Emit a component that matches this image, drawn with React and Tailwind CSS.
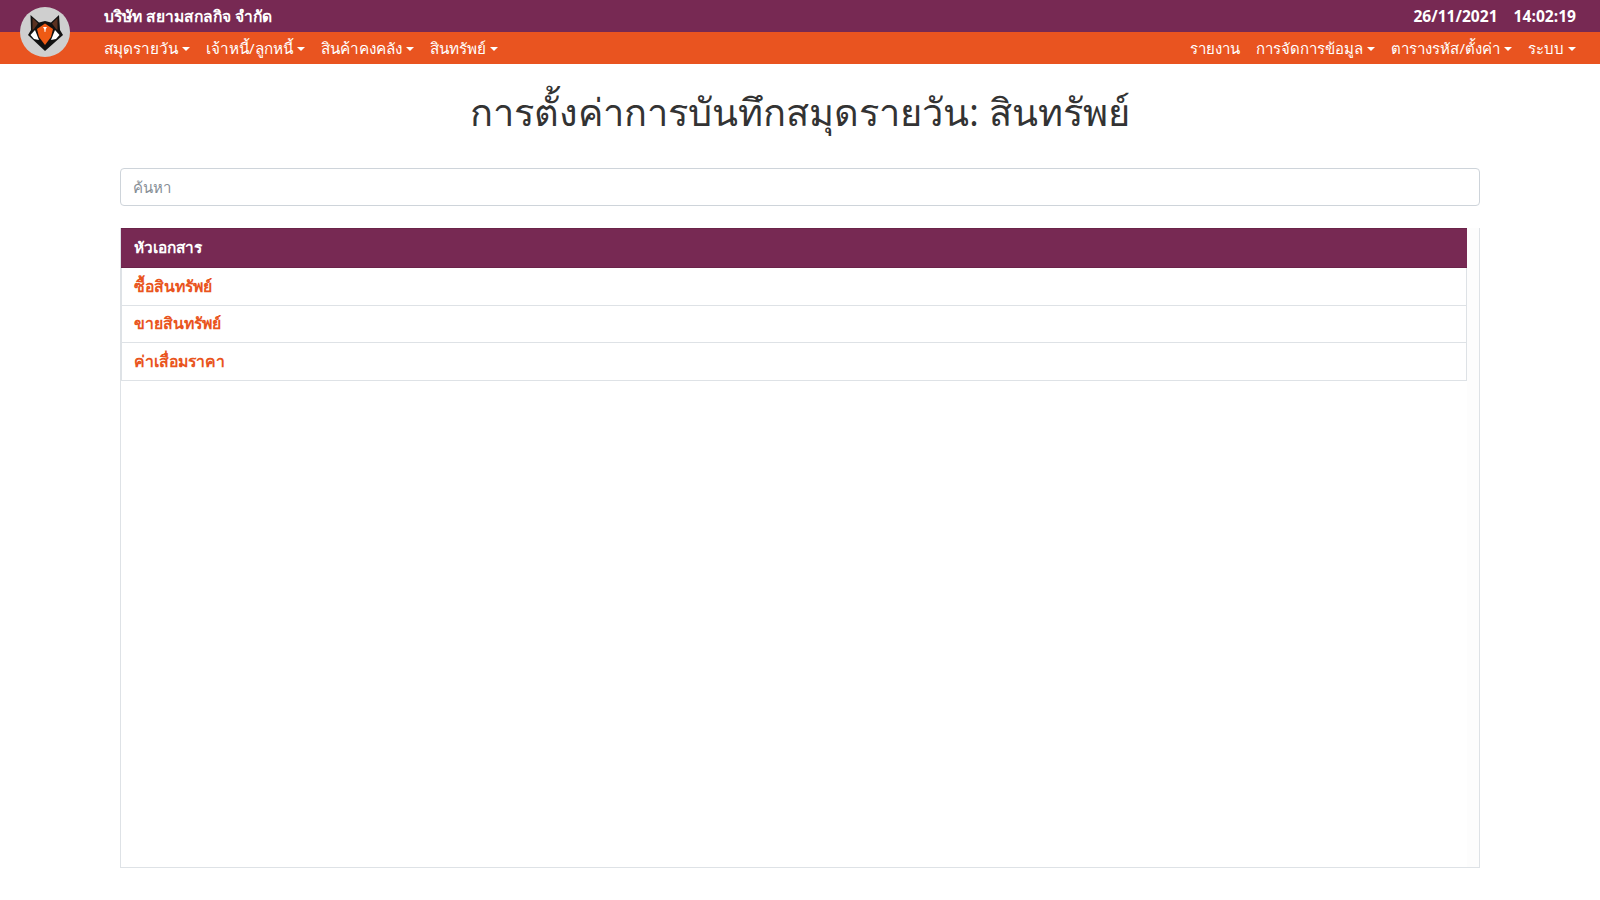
import React from 'react';

const leftMenu = ['สมุดรายวัน', 'เจ้าหนี้/ลูกหนี้', 'สินค้าคงคลัง', 'สินทรัพย์'];
const rightMenu = [
    { label: 'รายงาน', caret: false },
    { label: 'การจัดการข้อมูล', caret: true },
    { label: 'ตารางรหัส/ตั้งค่า', caret: true },
    { label: 'ระบบ', caret: true },
];
const rows = ['ซื้อสินทรัพย์', 'ขายสินทรัพย์', 'ค่าเสื่อมราคา'];

const Caret = () => (
    <span className="inline-block ml-[4px] align-[3px] w-0 h-0 border-t-[4.8px] border-t-white border-x-[4.8px] border-x-transparent" />
);

const FoxLogo = () => (
    <div className="absolute left-[20px] top-[7px] w-[50px] h-[50px] rounded-full bg-[#cfcfcf]">
        <svg width="50" height="50" viewBox="0 0 50 50">
            {/* โครงดำ */}
            <path d="M10.5 8 L19 15.5 L25 14 L31 15.5 L39 8 L40 23 L43 28 L25 44 L8 28 L11 23 Z" fill="#111" />
            {/* หู */}
            <path d="M12.5 11 L18 16.5 L14 22 L12.5 23 Z" fill="#5a3120" />
            <path d="M37.5 11 L32 16.5 L36 22 L37.5 23 Z" fill="#5a3120" />
            {/* แก้มขาว */}
            <path d="M10.5 28 L15 23 L19 33 L14 32 Z" fill="#fff" />
            <path d="M39.5 28 L35 23 L31 33 L36 32 Z" fill="#fff" />
            {/* หน้า */}
            <path d="M25 16.5 L33 22 L31 30 L25 38 L19 30 L17 22 Z" fill="#ee5a14" />
            <path d="M23 20 L27 20 L25.8 22 L25.4 25 L24.6 25 L24.2 22 Z" fill="#fff" />
        </svg>
    </div>
);

const App = () => {
    return (
        <div className="min-h-[900px] bg-white font-['Open_Sans','Noto_Sans',sans-serif] text-[#333]">
            <header className="relative text-white">
                <FoxLogo />
                <div className="h-[32px] bg-[#772953] flex items-center justify-between pt-[2px] pl-[104px] pr-[24px]">
                    <span className="text-[15.6px] font-semibold">บริษัท สยามสกลกิจ จำกัด</span>
                    <div className="flex gap-[16px] text-[15.6px] font-bold">
                        <span>26/11/2021</span>
                        <span>14:02:19</span>
                    </div>
                </div>
                <nav className="h-[32px] bg-[#e95420] flex items-center justify-between pl-[104px] pr-[24px] text-[15px]">
                    <ul className="flex gap-[16px] text-[15.3px]">
                        {leftMenu.map((item) => (
                            <li key={item}>{item}<Caret /></li>
                        ))}
                    </ul>
                    <ul className="flex gap-[16px]">
                        {rightMenu.map((item) => (
                            <li key={item.label}>{item.label}{item.caret && <Caret />}</li>
                        ))}
                    </ul>
                </nav>
            </header>

            <main className="px-[120px]">
                <h1 className="h-[104px] pt-[15px] text-center text-[38px] leading-[64px] font-normal">
                    การตั้งค่าการบันทึกสมุดรายวัน: สินทรัพย์
                </h1>

                <input
                    type="text"
                    placeholder="ค้นหา"
                    className="block w-full h-[38px] px-[12px] text-[15px] bg-white border border-[#ced4da] rounded-[4px] placeholder:text-[#868e96]"
                />

                <div className="mt-[22px] h-[640px] border-r border-b border-l border-[#dee2e6] bg-white flex">
                    <div className="flex-1">
                        <div className="h-[40px] bg-[#772953] border-y border-[#6a2449] flex items-center pl-[13px] text-white text-[15.4px] font-semibold">
                            หัวเอกสาร
                        </div>
                        <div className="border-l border-r border-[#dee2e6]">
                            {rows.map((row) => (
                                <div key={row} className="h-[37.5px] pt-[1px] border-b border-[#dee2e6] flex items-center pl-[12px] text-[#e95420] text-[15.8px] font-semibold">
                                    {row}
                                </div>
                            ))}
                        </div>
                    </div>
                    {/* แถบเลื่อน */}
                    <div className="w-[12px] bg-[#fdfdfd]" />
                </div>
            </main>
        </div>
    );
};

export default App;
